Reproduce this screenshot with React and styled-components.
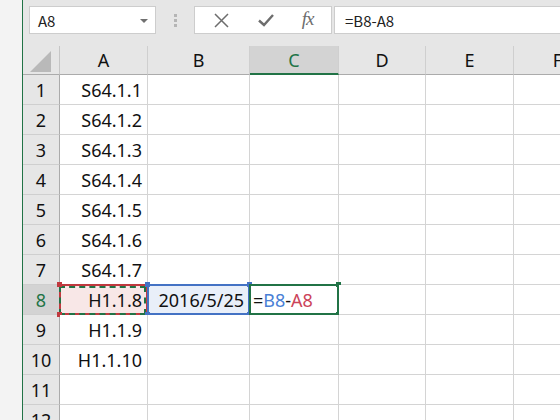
import React from 'react';
import styled, { createGlobalStyle, css } from 'styled-components';

const GREEN = '#217346';
const RED = '#c0393f';
const BLUE = '#4472c4';

const GlobalStyle = createGlobalStyle`
  html, body {
    margin: 0;
    padding: 0;
    background: #e6e6e6;
    overflow: hidden;
  }
  * {
    box-sizing: border-box;
  }
`;

const COLUMNS = [
  { key: 'A', width: 88 },
  { key: 'B', width: 102 },
  { key: 'C', width: 89 },
  { key: 'D', width: 87 },
  { key: 'E', width: 88 },
  { key: 'F', width: 88 },
];

const VALUES = {
  A: ['S64.1.1', 'S64.1.2', 'S64.1.3', 'S64.1.4', 'S64.1.5', 'S64.1.6', 'S64.1.7', 'H1.1.8', 'H1.1.9', 'H1.1.10'],
};

const Window = styled.div`
  display: flex;
  width: 560px;
  height: 420px;
  overflow: hidden;
  font-family: 'Noto Sans', 'Noto Sans CJK JP', sans-serif;
`;

const LeftStrip = styled.div`
  width: 23px;
  flex: none;
  background: #f3f3f3;
  border-right: 1px solid ${GREEN};
`;

const Main = styled.div`
  flex: 1;
  display: flex;
  flex-direction: column;
  min-width: 0;
  background: #e6e6e6;
`;

const FormulaBar = styled.div`
  height: 46px;
  flex: none;
  display: flex;
  align-items: flex-start;
  padding: 6px 0 0 6px;
`;

const Field = styled.div`
  height: 28px;
  background: #fff;
  border: 1px solid #cdcdcd;
  display: flex;
  align-items: center;
  font-family: 'Noto Sans CJK JP', sans-serif;
  font-size: 15px;
  color: #222;
`;

const NameBox = styled(Field)`
  width: 127px;
  padding: 0 7px 0 8px;
  justify-content: space-between;
`;

const Caret = styled.span`
  width: 0;
  height: 0;
  border-left: 4px solid transparent;
  border-right: 4px solid transparent;
  border-top: 4px solid #707070;
  margin-top: 1px;
`;

const Grip = styled.div`
  width: 38px;
  height: 28px;
  display: flex;
  flex-direction: column;
  align-items: center;
  justify-content: center;
  gap: 2px;
`;

const GripDot = styled.span`
  width: 3px;
  height: 3px;
  background: #b5b5b5;
`;

const Buttons = styled(Field)`
  width: 138px;
  justify-content: space-around;
  padding: 0 4px;
  margin-right: 2px;
`;

const Fx = styled.span`
  font-family: 'Liberation Serif', serif;
  font-style: italic;
  font-size: 19px;
  color: #6d6d6d;
  letter-spacing: -1px;
  margin-top: -2px;
`;

const FormulaInput = styled(Field)`
  flex: 1;
  padding-left: 10px;
  border-right: none;
`;

const Sheet = styled.div`
  display: grid;
  grid-template-columns: 37px ${COLUMNS.map(c => `${c.width}px`).join(' ')};
  grid-template-rows: 29px;
  grid-auto-rows: 30px;
  font-size: 18px;
  color: #111;
`;

const HeaderCell = styled.div`
  position: relative;
  display: flex;
  align-items: center;
  justify-content: center;
  background: ${p => (p.selected ? '#d3d3d3' : '#e6e6e6')};
  color: ${p => (p.selected ? GREEN : '#111')};
  border-right: 1px solid ${p => (p.corner ? '#c6c6c6' : '#cfcfcf')};
  border-bottom: 1px solid #ababab;
  ${p =>
    p.selected &&
    css`
      border-bottom: 2px solid ${GREEN};
    `}
`;

const RowHeader = styled.div`
  display: flex;
  align-items: center;
  justify-content: center;
  background: ${p => (p.selected ? '#d3d3d3' : '#e6e6e6')};
  color: ${p => (p.selected ? GREEN : '#111')};
  border-right: 1px solid #ababab;
  border-bottom: 1px solid #cfcfcf;
`;

const Corner = styled.div`
  width: 0;
  height: 0;
  border-left: 21px solid transparent;
  border-bottom: 21px solid #b9b9b9;
  margin: 2px 0 0 -2px;
`;

const Cell = styled.div`
  position: relative;
  display: flex;
  align-items: center;
  justify-content: ${p => (p.left ? 'flex-start' : 'flex-end')};
  padding: ${p => (p.left ? '0 0 0 3px' : '0 5px 0 0')};
  background: ${p => p.tint || '#fff'};
  border-right: 1px solid #d4d4d4;
  border-bottom: 1px solid #d4d4d4;
  white-space: nowrap;
`;

const Frame = styled.div`
  position: absolute;
  top: -1px;
  left: -1px;
  right: -1px;
  bottom: -1px;
  border: 2px ${p => p.kind || 'solid'} ${p => p.color};
  pointer-events: none;
`;

const Marquee = styled.div`
  position: absolute;
  top: 1px;
  left: -1px;
  right: 1px;
  bottom: -1px;
  border: 2px dashed ${GREEN};
  pointer-events: none;
`;

const Handle = styled.span`
  position: absolute;
  width: 5px;
  height: 5px;
  background: ${p => p.color};
  ${p => (p.top ? 'top: -3px;' : 'bottom: -3px;')}
  ${p => (p.right ? 'right: -3px;' : 'left: -3px;')}
`;

const Ref = styled.span`
  color: ${p => p.color};
`;

const Handles = ({ color, corners }) =>
  corners.map(c => (
    <Handle key={c} color={color} top={c.includes('t')} right={c.includes('r')} />
  ));

const CrossIcon = () => (
  <svg width="17" height="17" viewBox="0 0 17 17">
    <path d="M2 2 L15 15 M15 2 L2 15" stroke="#6d6d6d" strokeWidth="1.5" fill="none" />
  </svg>
);

const CheckIcon = () => (
  <svg width="18" height="16" viewBox="0 0 18 16">
    <path d="M2 8.5 L7 13 L16 3" stroke="#6d6d6d" strokeWidth="2.4" fill="none" />
  </svg>
);

const renderCell = (col, row) => {
  const key = `${col}${row}`;
  if (key === 'A8') {
    return (
      <Cell key={key} tint="#f8e7e7">
        <Frame color={RED} />
        <Marquee />
        <Handles color={RED} corners={['tl', 'tr', 'bl', 'br']} />
        {VALUES.A[row - 1]}
      </Cell>
    );
  }
  if (key === 'B8') {
    return (
      <Cell key={key} tint="#e9eff9">
        <Frame color={BLUE} />
        <Handles color={BLUE} corners={['tl', 'tr', 'bl', 'br']} />
        2016/5/25
      </Cell>
    );
  }
  if (key === 'C8') {
    return (
      <Cell key={key} left>
        <Frame color={GREEN} />
        <Handles color={GREEN} corners={['br', 'tr']} />
        =<Ref color="#4a7fd6">B8</Ref>-<Ref color="#cc4459">A8</Ref>
      </Cell>
    );
  }
  return (
    <Cell key={key}>{col === 'A' ? VALUES.A[row - 1] : null}</Cell>
  );
};

const App = () => {
  const rows = Array.from({ length: 12 }, (_, i) => i + 1);
  return (
    <Window>
      <GlobalStyle />
      <LeftStrip />
      <Main>
        <FormulaBar>
          <NameBox>
            A8
            <Caret />
          </NameBox>
          <Grip>
            <GripDot />
            <GripDot />
            <GripDot />
          </Grip>
          <Buttons>
            <CrossIcon />
            <CheckIcon />
            <Fx>fx</Fx>
          </Buttons>
          <FormulaInput>=B8-A8</FormulaInput>
        </FormulaBar>
        <Sheet>
          <HeaderCell corner>
            <Corner />
          </HeaderCell>
          {COLUMNS.map(c => (
            <HeaderCell key={c.key} selected={c.key === 'C'}>
              {c.key}
            </HeaderCell>
          ))}
          {rows.map(r => (
            <React.Fragment key={r}>
              <RowHeader selected={r === 8}>{r}</RowHeader>
              {COLUMNS.map(c => renderCell(c.key, r))}
            </React.Fragment>
          ))}
        </Sheet>
      </Main>
    </Window>
  );
};

export default App;
